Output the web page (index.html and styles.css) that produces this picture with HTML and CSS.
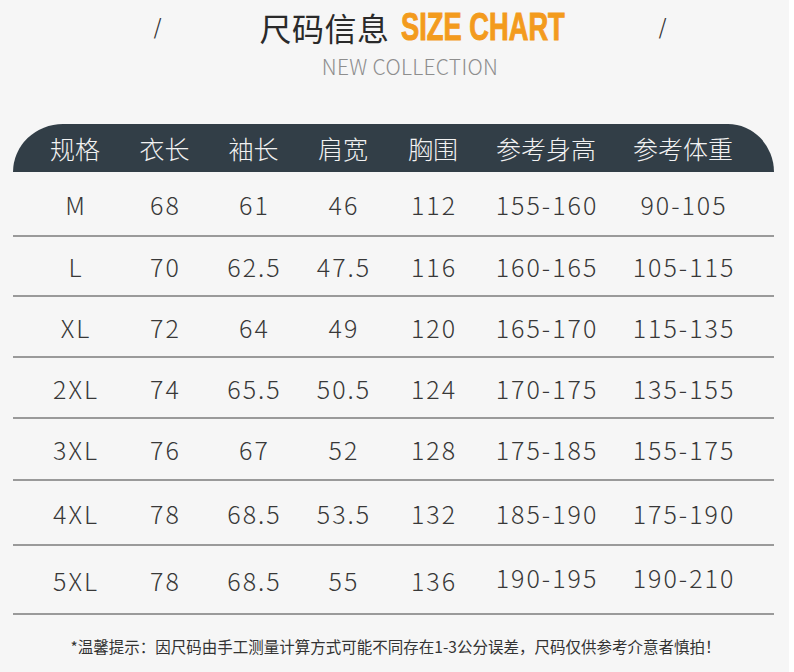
FILE: index.html
```html
<!DOCTYPE html>
<html lang="zh">
<head>
<meta charset="utf-8">
<link rel="stylesheet" href="styles.css">
</head>
<body>
<div class="page">
  <header class="title">
    <span class="slash">/</span>
    <div class="title-center">
      <div class="heading"><span class="cn">尺码信息</span><span class="en">SIZE CHART</span></div>
      <div class="sub">NEW COLLECTION</div>
    </div>
    <span class="slash">/</span>
  </header>
  <div class="table">
    <div class="row head">
      <span>规格</span><span>衣长</span><span>袖长</span><span>肩宽</span><span>胸围</span><span>参考身高</span><span>参考体重</span>
    </div>
    <div class="row r1"><span>M</span><span>68</span><span>61</span><span>46</span><span>112</span><span>155-160</span><span>90-105</span></div>
    <div class="row r2"><span>L</span><span>70</span><span>62.5</span><span>47.5</span><span>116</span><span>160-165</span><span>105-115</span></div>
    <div class="row r3"><span>XL</span><span>72</span><span>64</span><span>49</span><span>120</span><span>165-170</span><span>115-135</span></div>
    <div class="row r4"><span>2XL</span><span>74</span><span>65.5</span><span>50.5</span><span>124</span><span>170-175</span><span>135-155</span></div>
    <div class="row r5"><span>3XL</span><span>76</span><span>67</span><span>52</span><span>128</span><span>175-185</span><span>155-175</span></div>
    <div class="row r6"><span>4XL</span><span>78</span><span>68.5</span><span>53.5</span><span>132</span><span>185-190</span><span>175-190</span></div>
    <div class="row r7"><span>5XL</span><span>78</span><span>68.5</span><span>55</span><span>136</span><span class="up">190-195</span><span class="up">190-210</span></div>
  </div>
  <p class="note">*温馨提示：因尺码由手工测量计算方式可能不同存在1-3公分误差，尺码仅供参考介意者慎拍！</p>
</div>
<div class="strip"></div>
</body>
</html>
```

FILE: styles.css
```css
html, body {
  margin: 0;
  padding: 0;
}
body {
  width: 794px;
  height: 672px;
  overflow: hidden;
  display: flex;
  background: #ffffff;
  font-family: "Noto Sans CJK SC", "Noto Sans", sans-serif;
}
.page {
  width: 789px;
  height: 672px;
  background: #f6f6f6;
  display: flex;
  flex-direction: column;
}
.strip {
  flex: 1;
  background: #ffffff;
}
.title {
  height: 124px;
  display: flex;
  align-items: flex-start;
  justify-content: center;
  box-sizing: border-box;
  padding-top: 6px;
  padding-left: 31px;
}
.slash {
  font-family: "DejaVu Sans", sans-serif;
  font-weight: 200;
  font-size: 24px;
  color: #333;
  margin-top: 7px;
  line-height: 30px;
}
.title-center {
  width: 497px;
  display: flex;
  flex-direction: column;
  align-items: center;
}
.heading {
  display: flex;
  align-items: center;
  height: 42px;
  margin-left: 4px;
}
.cn {
  font-size: 32px;
  font-weight: 400;
  color: #2a2a2a;
  letter-spacing: 0.5px;
}
.en {
  display: inline-block;
  font-family: "Liberation Sans", sans-serif;
  font-weight: 700;
  font-size: 39px;
  color: #f39b1d;
  transform: scaleX(0.7);
  transform-origin: left center;
  margin-left: 11px;
  width: 164px;
  white-space: nowrap;
  -webkit-text-stroke: 1px #f39b1d;
}
.sub {
  font-family: "Noto Sans CJK SC", sans-serif;
  font-weight: 300;
  font-size: 21px;
  color: #8e8e8e;
  margin-top: 4px;
  line-height: 28px;
  letter-spacing: 0.3px;
}
.table {
  margin-left: 13px;
  width: 761px;
  display: flex;
  flex-direction: column;
}
.row {
  display: grid;
  grid-template-columns: 90px 89px 89px 90px 90px 136px 138px;
  padding-left: 17px;
  align-items: center;
  border-bottom: 2px solid #9a9a9a;
  box-sizing: border-box;
  font-size: 25px;
  font-weight: 300;
  color: #383838;
  letter-spacing: 2px;
}
.row span {
  text-align: center;
  white-space: nowrap;
  margin-right: -2px;
}
.row.head {
  height: 48px;
  background: #323e47;
  color: #f2f2f2;
  border-bottom: none;
  border-radius: 50px 46px 0 0 / 48px 48px 0 0;
  font-size: 25px;
  font-weight: 300;
  letter-spacing: 0;
}
.row.head span {
  margin-right: 0;
}
.r1 { height: 65px; }
.r2 { height: 60px; }
.r3 { height: 61px; }
.r4 { height: 61px; }
.r5 { height: 62px; }
.r6 { height: 65px; }
.r7 { height: 69px; }
.row .up {
  position: relative;
  top: -3px;
}
.note {
  margin: 0;
  padding-top: 20px;
  text-align: center;
  font-size: 15.5px;
  color: #333;
  padding-left: 2px;
}
```
